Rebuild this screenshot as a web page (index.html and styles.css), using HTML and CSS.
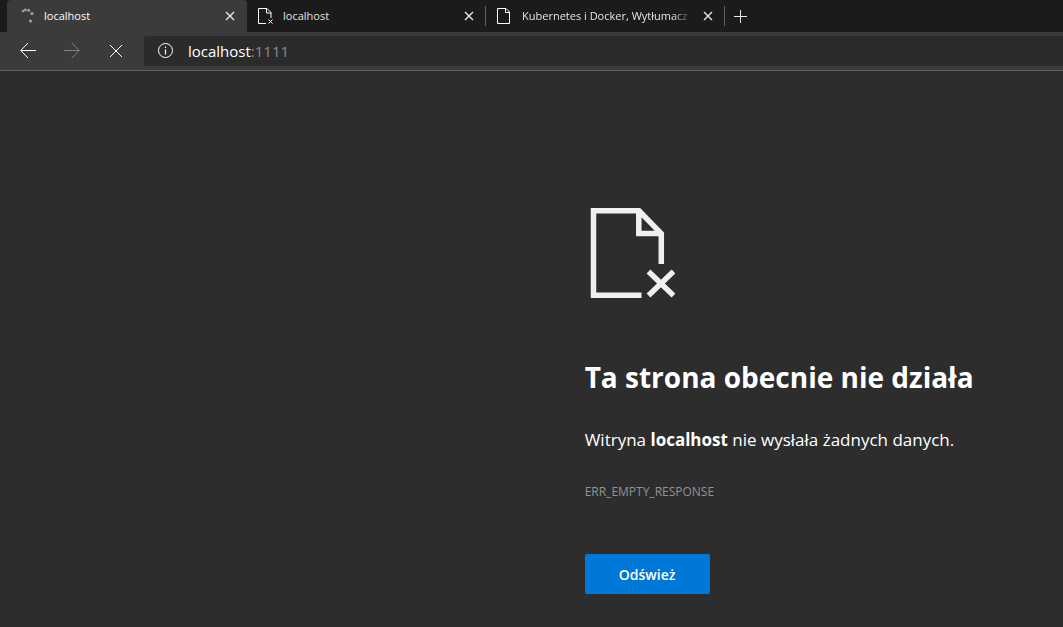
FILE: index.html
```html
<!DOCTYPE html>
<html lang="pl">
<head>
<meta charset="utf-8">
<meta name="viewport" content="width=device-width, initial-scale=1">
<title>localhost</title>
<link rel="stylesheet" href="styles.css">
</head>
<body>
<header class="browser">
  <nav class="tabs" aria-label="Karty">
    <div class="tab tab-active">
      <svg class="tab-icon" viewBox="0 0 16 16" fill="#a0a0a0" aria-hidden="true"><circle cx="3" cy="3" r="1.3"/><circle cx="5.3" cy="2" r="1.4"/><circle cx="8.6" cy="2.3" r="1.5"/><circle cx="12" cy="5.5" r="1.6"/><circle cx="10.5" cy="13" r="1.6"/></svg>
      <span class="tab-title">localhost</span>
      <button class="tab-close" aria-label="Zamknij kartę"><svg viewBox="0 0 10 10" aria-hidden="true"><path d="M1 1l8 8M9 1L1 9"/></svg></button>
    </div>
    <div class="tab">
      <svg class="tab-icon" viewBox="0 0 16 16" fill="none" stroke="#fff" aria-hidden="true"><path d="M9 15.5H1.500V.5h8.500l4 4V10M9.500.5v4.500H14"/><path d="M11.500 11.500l4 4M15.500 11.500l-4 4"/></svg>
      <span class="tab-title">localhost</span>
      <button class="tab-close" aria-label="Zamknij kartę"><svg viewBox="0 0 10 10" aria-hidden="true"><path d="M1 1l8 8M9 1L1 9"/></svg></button>
    </div>
    <div class="tab tab-divided">
      <svg class="tab-icon" viewBox="0 0 16 16" fill="none" stroke="#fff" aria-hidden="true"><path d="M1.500.5h8.500l3.500 3.500v11.500h-12zM9.500.5v4H13.500"/></svg>
      <span class="tab-title tab-title-long">Kubernetes i Docker, Wytłumacz</span>
      <button class="tab-close" aria-label="Zamknij kartę"><svg viewBox="0 0 10 10" aria-hidden="true"><path d="M1 1l8 8M9 1L1 9"/></svg></button>
    </div>
    <button class="new-tab" aria-label="Nowa karta"><svg viewBox="0 0 13 13" aria-hidden="true"><path d="M6.500 0v13M0 6.500h13"/></svg></button>
  </nav>
  <div class="toolbar">
    <button class="tool" aria-label="Wstecz"><svg viewBox="0 0 16 16" aria-hidden="true"><path d="M16 7.500H.8M8 0L.8 7.500 8 15"/></svg></button>
    <button class="tool" aria-label="Dalej" disabled><svg viewBox="0 0 16 16" aria-hidden="true"><path d="M0 7.500h15.200M8 0l7.200 7.500L8 15"/></svg></button>
    <button class="tool" aria-label="Zatrzymaj"><svg viewBox="0 0 16 16" aria-hidden="true"><path d="M2 2l12 12M14 2l-12 12"/></svg></button>
    <div class="address">
      <svg class="info" viewBox="0 0 16 16" fill="none" stroke="#fff" aria-hidden="true"><circle cx="7.500" cy="7.500" r="7"/><path d="M7.500 6.500v5M7.500 3.500v1.500" stroke-width="1.200"/></svg>
      <a class="url" href="#">localhost<span class="port">:1111</span></a>
    </div>
  </div>
</header>
<main class="page">
  <svg class="page-icon" viewBox="0 0 90 92" fill="none" stroke="#f0f0f0" stroke-width="5.500" aria-hidden="true"><path d="M56.500 88.300H8.500V3.800H54L76.300 26.500V57M53.800 3.800V26.500H76.300"/><path d="M63.500 64.500l25 24M88.500 64.500l-25 24"/></svg>
  <h1 class="title">Ta strona obecnie nie działa</h1>
  <p class="message">Witryna <strong>localhost</strong> nie wysłała żadnych danych.</p>
  <p class="code">ERR_EMPTY_RESPONSE</p>
  <button class="reload">Odśwież</button>
</main>
</body>
</html>
```
FILE: styles.css
```css
* {
  box-sizing: border-box;
}

body {
  margin: 0;
  background: #2d2d2d;
  color: #fff;
  font-family: "Open Sans", "Noto Sans", sans-serif;
}

button {
  border: 0;
  padding: 0;
  background: none;
  color: inherit;
  font: inherit;
}

svg {
  display: block;
}

.browser {
  background: #3b3b3b;
  border-bottom: 1px solid #606060;
}

.tabs {
  display: flex;
  height: 32px;
  padding-left: 7px;
  background: #1b1b1b;
}

.tab {
  position: relative;
  display: flex;
  align-items: center;
  flex: 0 1 239px;
  min-width: 0;
  padding: 0 12px 0 10px;
  color: #e4e4e4;
  font-size: 11px;
}

.tab-active {
  flex-basis: 240px;
  padding: 0 12px 0 13px;
  border-radius: 4px 4px 0 0;
  background: #3b3b3b;
  color: #fff;
}

.tab-divided::before,
.new-tab::before {
  content: "";
  position: absolute;
  left: -1px;
  top: 6px;
  width: 1px;
  height: 20px;
  background: #606060;
}

.tab-icon {
  flex: none;
  width: 16px;
  height: 16px;
  margin-right: 10px;
}

.tab-active .tab-icon {
  margin-right: 8px;
}

.tab-title {
  flex: 1;
  min-width: 0;
  overflow: hidden;
  padding-bottom: 2px;
  white-space: nowrap;
}

.tab-title-long {
  margin-right: 10px;
  mask-image: linear-gradient(to right, #000 88%, transparent);
}

.tab-close svg {
  width: 10px;
  height: 10px;
  fill: none;
  stroke: #e8e8e8;
  stroke-width: 1.4;
}

.new-tab {
  position: relative;
  width: 30px;
  padding-left: 9px;
}

.new-tab svg {
  width: 13px;
  height: 13px;
  fill: none;
  stroke: #e8e8e8;
}

.toolbar {
  display: flex;
  align-items: center;
  height: 38px;
  padding-left: 20px;
}

.tool {
  flex: none;
  margin-right: 28px;
}

.tool:last-of-type {
  margin-right: 20px;
}

.tool svg {
  width: 16px;
  height: 16px;
  fill: none;
  stroke: #fff;
}

.tool:disabled svg {
  stroke: #808080;
}

.address {
  display: flex;
  align-items: center;
  flex: 1;
  height: 30px;
  padding-left: 14px;
  border-radius: 3px 0 0 3px;
  background: #2b2b2b;
}

.info {
  width: 16px;
  height: 16px;
  margin-right: 14px;
}

.url {
  color: #fff;
  font-size: 15px;
  text-decoration: none;
}

.port {
  color: #8c8c8c;
}

.page {
  padding: 136px 0 32px 55%;
}

.page-icon {
  width: 90px;
  height: 92px;
}

.title {
  margin: 58px 0 0;
  font-size: 28px;
  line-height: 40px;
}

.message {
  margin: 31px 0 0;
  font-size: 17px;
  line-height: 24px;
}

.code {
  margin: 32px 0 0;
  color: #929292;
  font-size: 12px;
  font-weight: 500;
  line-height: 16px;
}

.reload {
  margin-top: 54px;
  width: 125px;
  height: 40px;
  border-radius: 2px;
  background: #0078d7;
  font-size: 14px;
  font-weight: 600;
}
```
